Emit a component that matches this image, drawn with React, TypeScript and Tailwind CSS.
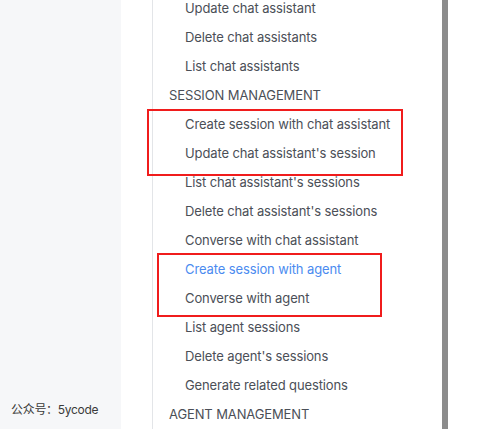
import React from "react";

type Item = { label: string; heading?: boolean; active?: boolean };

const items: Item[] = [
  { label: "Update chat assistant" },
  { label: "Delete chat assistants" },
  { label: "List chat assistants" },
  { label: "SESSION MANAGEMENT", heading: true },
  { label: "Create session with chat assistant" },
  { label: "Update chat assistant's session" },
  { label: "List chat assistant's sessions" },
  { label: "Delete chat assistant's sessions" },
  { label: "Converse with chat assistant" },
  { label: "Create session with agent", active: true },
  { label: "Converse with agent" },
  { label: "List agent sessions" },
  { label: "Delete agent's sessions" },
  { label: "Generate related questions" },
  { label: "AGENT MANAGEMENT", heading: true },
];

export default function App() {
  return (
    <div
      className="relative flex h-[429px] w-[500px] overflow-hidden bg-white"
      style={{ fontFamily: "Inter, 'Noto Sans CJK SC', sans-serif" }}
    >
      <div className="relative w-[121px] shrink-0 bg-[#f6f7f9]">
        <div className="absolute left-[11px] top-[401px] text-[12px] leading-[18px] tracking-[-0.3px] text-[#3a3a3a]">
          公众号：5ycode
        </div>
      </div>
      <div className="w-[31px] shrink-0" />
      <div className="relative w-[290px] shrink-0 border-l border-[#e3e5e8]">
        <ul className="mt-[-6.5px] flex flex-col">
          {items.map((it) => (
            <li
              key={it.label}
              className={
                it.heading
                  ? "h-[29px] pl-[16px] text-[13px] leading-[29px] tracking-[-0.12px] text-[#4b4f57]"
                  : it.active
                  ? "h-[29px] pl-[32px] text-[13px] leading-[29px] tracking-[-0.12px] text-[#4b8bf0]"
                  : "h-[29px] pl-[32px] text-[13px] leading-[29px] tracking-[-0.12px] text-[#4b4f57]"
              }
            >
              {it.label}
            </li>
          ))}
        </ul>
      </div>
      <div className="h-full w-[6px] shrink-0 bg-[#8c8c8c]" />
      <div className="flex-1 bg-white" />

      <div className="pointer-events-none absolute left-[147px] top-[109px] h-[67px] w-[256px] border-2 border-[#f01c1c]" />
      <div className="pointer-events-none absolute left-[157px] top-[253px] h-[64px] w-[225px] border-2 border-[#f01c1c]" />
    </div>
  );
}
